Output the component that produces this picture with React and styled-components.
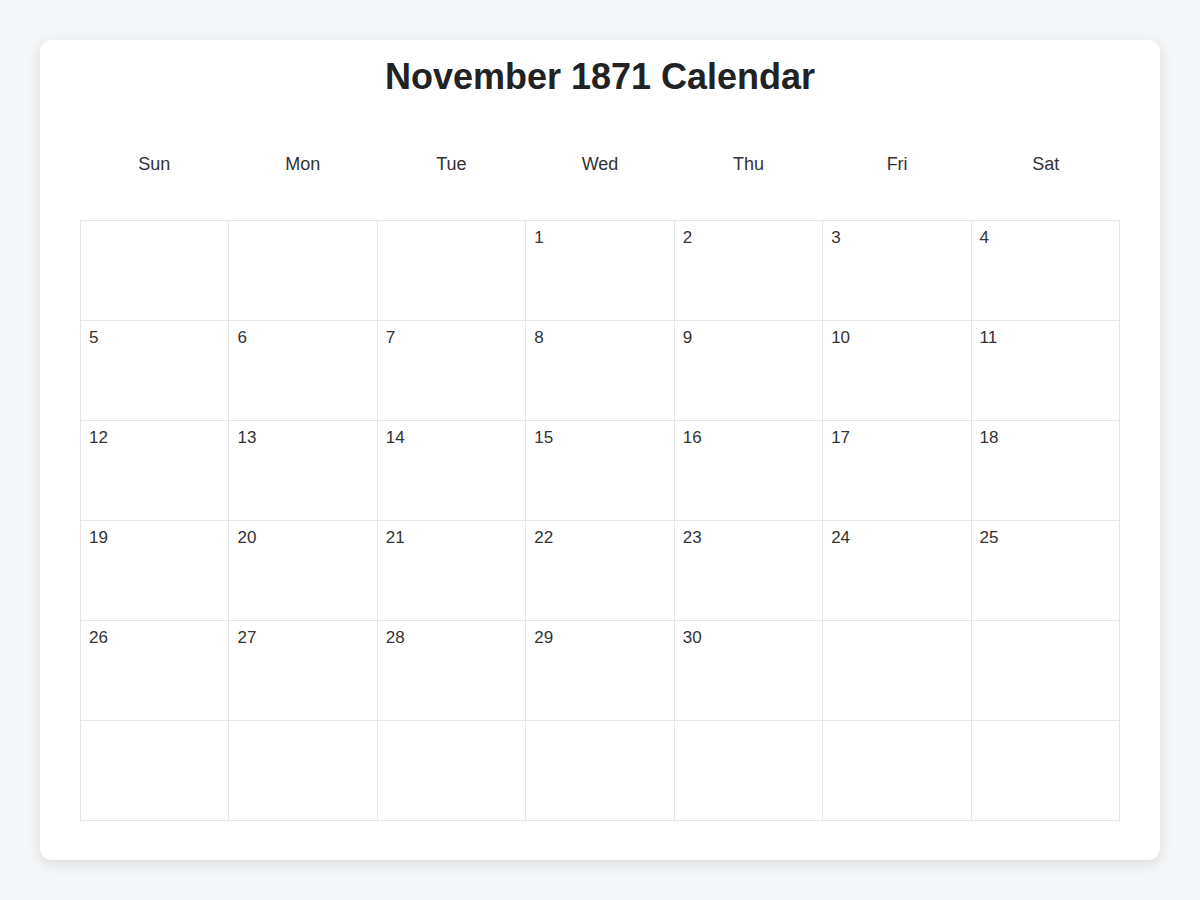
import styled, { createGlobalStyle } from "styled-components";

const GlobalStyle = createGlobalStyle`
  *, *::before, *::after {
    box-sizing: border-box;
  }
  body {
    margin: 0;
    background: #f5f6f8;
    font-family: "Liberation Sans", Arial, sans-serif;
  }
`;

const Page = styled.div`
  padding: 40px;
`;

const Card = styled.div`
  background: #fff;
  border-radius: 12px;
  box-shadow: 0 4px 14px rgba(0, 0, 0, 0.1);
  padding: 16px 40px 39px;
`;

const Title = styled.h1`
  margin: 0 0 40px;
  text-align: center;
  font-size: 36px;
  font-weight: 700;
  color: #222;
`;

const WeekRow = styled.div`
  display: grid;
  grid-template-columns: repeat(7, 1fr);
  padding: 16px 0;
  margin-bottom: 29px;
`;

const WeekDay = styled.div`
  text-align: center;
  font-size: 18px;
  color: #333;
`;

const Grid = styled.div`
  display: grid;
  grid-template-columns: repeat(7, 1fr);
  grid-auto-rows: 100px;
  border-top: 1px solid #e6e6e6;
  border-left: 1px solid #e6e6e6;
`;

const Cell = styled.div`
  border-right: 1px solid #e6e6e6;
  border-bottom: 1px solid #e6e6e6;
  padding: 7px 8px;
  font-size: 17px;
  color: #333;
`;

const days = ["Sun", "Mon", "Tue", "Wed", "Thu", "Fri", "Sat"];

// Nov 1 1871 was a Wednesday
const cells = Array.from({ length: 42 }, (_, i) => {
  const d = i - 2;
  return d >= 1 && d <= 30 ? d : null;
});

const App = () => {
  return (
    <>
      <GlobalStyle />
      <Page>
        <Card>
          <Title>November 1871 Calendar</Title>
          <WeekRow>
            {days.map((d) => (
              <WeekDay key={d}>{d}</WeekDay>
            ))}
          </WeekRow>
          <Grid>
            {cells.map((d, i) => (
              <Cell key={i}>{d}</Cell>
            ))}
          </Grid>
        </Card>
      </Page>
    </>
  );
};

export default App;
